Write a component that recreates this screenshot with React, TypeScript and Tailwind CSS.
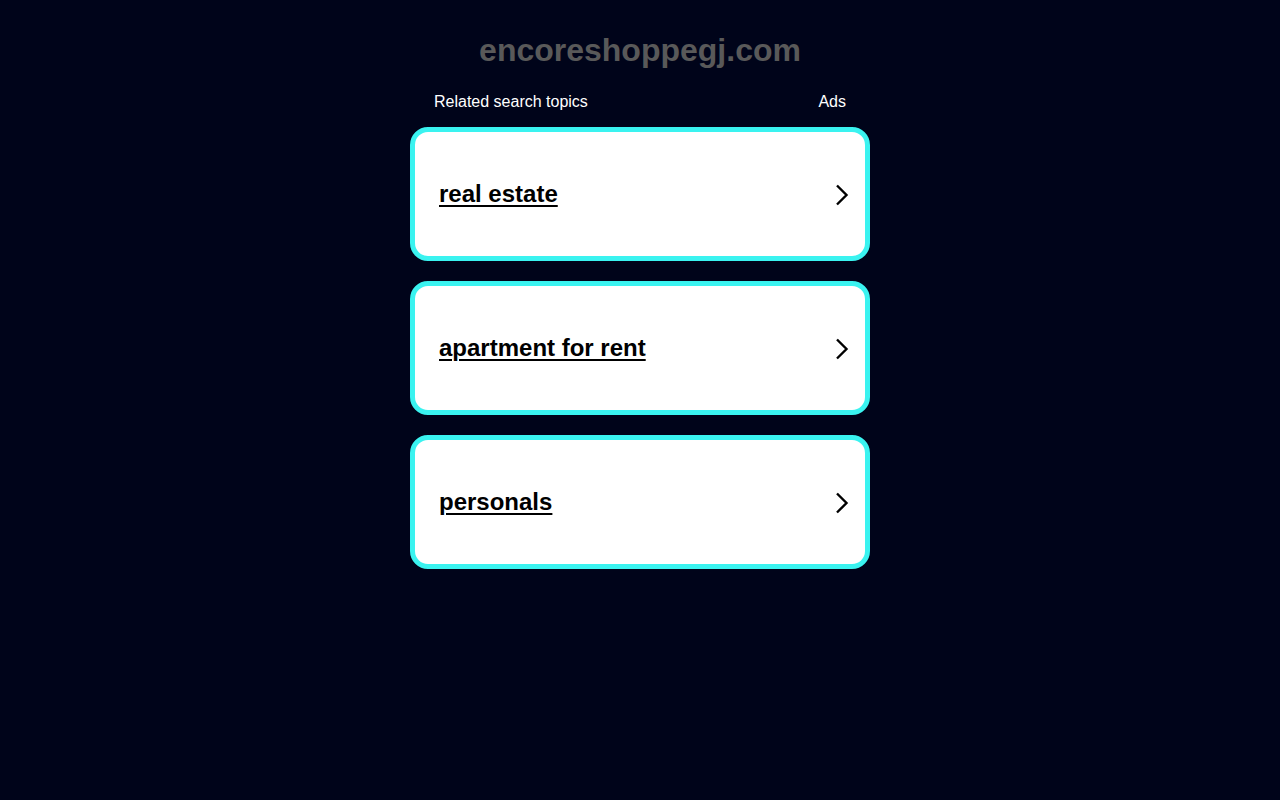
const topics = ['real estate', 'apartment for rent', 'personals']

function Chevron() {
  return (
    <svg width="14" height="22" viewBox="0 0 14 22" fill="none" className="mt-[2px] shrink-0">
      <path d="M2 1.5 L11.5 11 L2 20.5" stroke="#000" strokeWidth="2.4" />
    </svg>
  )
}

export default function App() {
  return (
    <div className="min-h-screen bg-[#00041a] font-['Liberation_Sans',Arial,sans-serif]">
      <div className="mx-auto w-[460px] pt-[31px]">
        <h1 className="text-center text-[32px] font-bold leading-[38px] text-[#595959]">
          encoreshoppegj.com
        </h1>
        <div className="mt-[24px] flex items-center justify-between px-[24px] text-[16px] leading-[18px] text-white">
          <span>Related search topics</span>
          <span>Ads</span>
        </div>
        <div className="mt-[16px] flex flex-col gap-[20px]">
          {topics.map((t) => (
            <a
              key={t}
              href="#"
              className="flex h-[134px] items-center justify-between rounded-[18px] border-[5px] border-[#3af3f0] bg-white pl-[24px] pr-[16px]"
            >
              <span className="text-[24px] font-bold leading-[28px] text-black underline decoration-[2px] underline-offset-[3px]">
                {t}
              </span>
              <Chevron />
            </a>
          ))}
        </div>
      </div>
    </div>
  )
}
